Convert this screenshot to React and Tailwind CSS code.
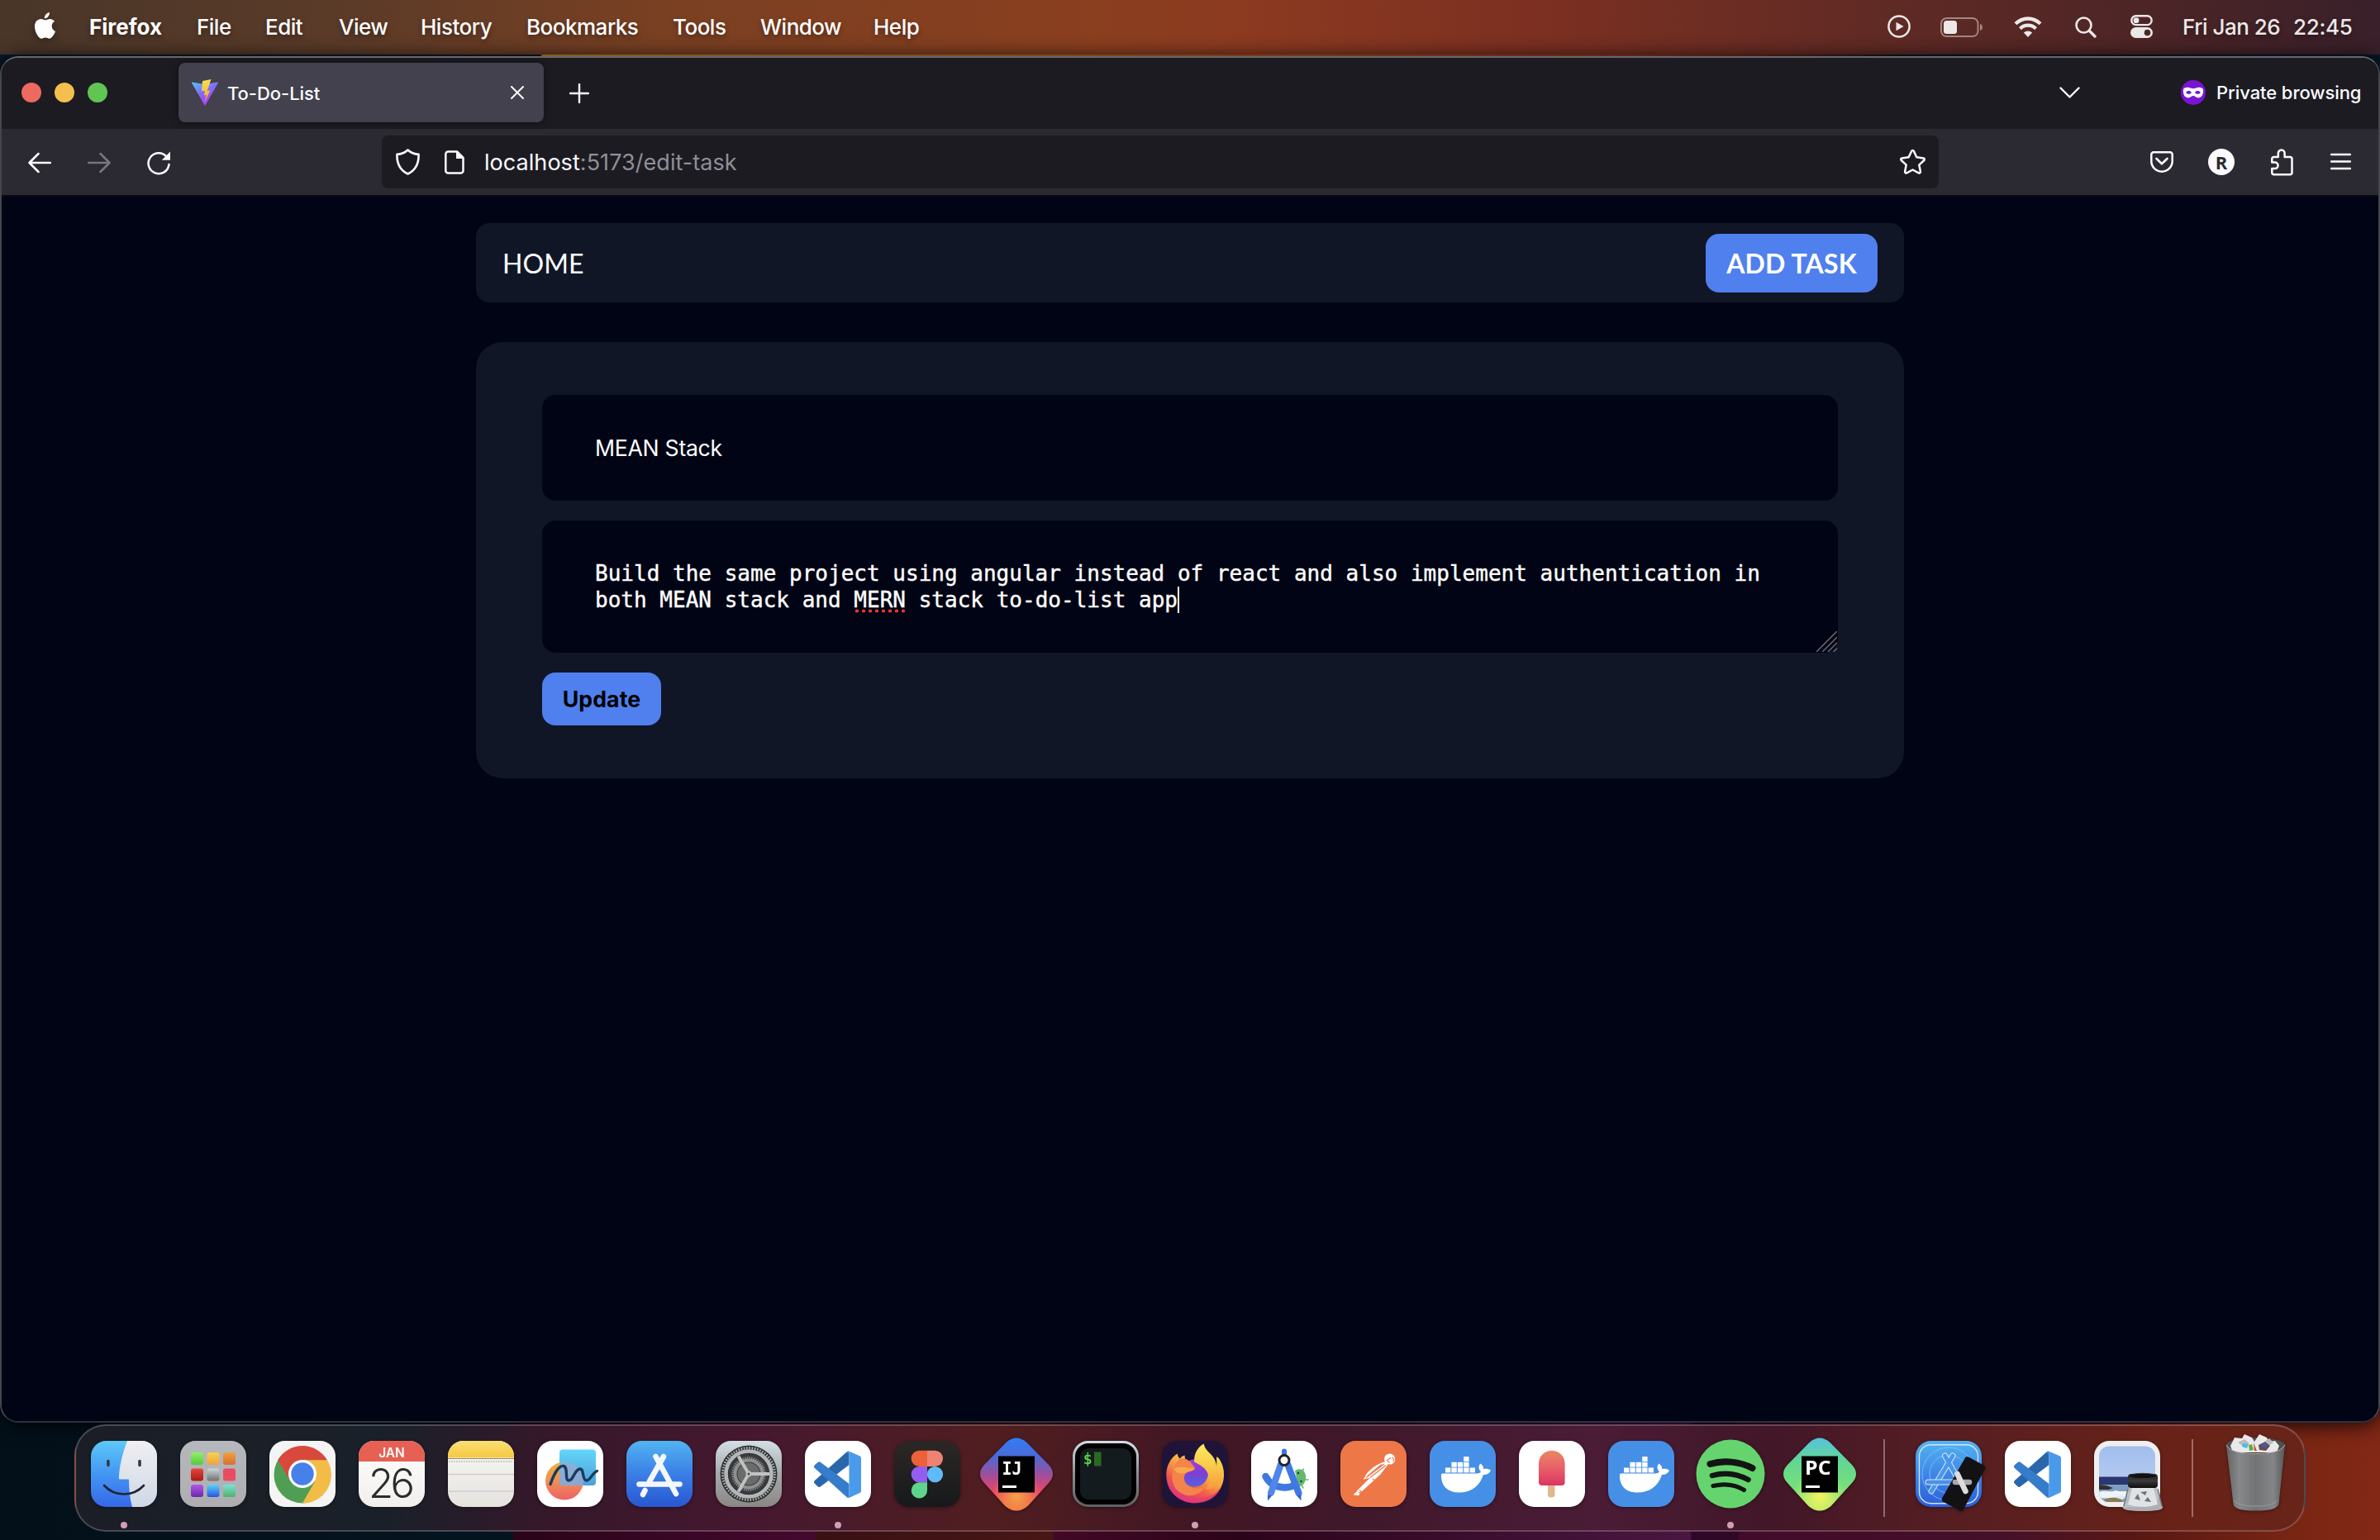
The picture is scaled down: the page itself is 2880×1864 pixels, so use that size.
import React from "react";

const stroke = { fill: "none", stroke: "currentColor", strokeLinecap: "round", strokeLinejoin: "round" };

/* ---------- menu bar ---------- */

const menus = [
  ["File", "w-[83px]"],
  ["Edit", "w-[89px]"],
  ["View", "w-[99px]"],
  ["History", "w-[128px]"],
  ["Bookmarks", "w-[177px]"],
  ["Tools", "w-[106px]"],
  ["Window", "w-[137px]"],
  ["Help", "w-[60px]"],
];

function MenuBar() {
  return (
    <header className="flex h-[66px] shrink-0 items-center bg-[linear-gradient(90deg,#493629_0%,#5c3b28_15%,#7a4022_28%,#8a3f1f_46%,#8c3a20_52%,#7d3021_64%,#642b24_77%,#4d2526_90%,#39202a_100%)] pb-[2px] pl-[41px] text-[26px] font-medium text-white">
      <svg className="-mt-[2px] h-[32px] w-[27px] drop-shadow-[0_3px_4px_rgba(0,0,0,0.35)]" viewBox="0 0 27 32" fill="white">
        <path d="M18.8 0c.3 2-.5 3.900-1.700 5.300-1.200 1.400-2.800 2.300-4.300 2.200-.3-1.900.6-3.800 1.700-5.100C15.700 1 17.500.1 18.800 0zM13.900 9.300c1.400 0 2.900-1.400 5.500-1.400 2.300 0 4.400 1.100 5.700 2.900-5.100 3-4.300 9.900.9 12.100-.7 1.900-1.500 3.500-2.600 5.200-1.300 1.900-2.600 3.600-4.600 3.600-1.900 0-2.500-1.200-4.800-1.200s-3 1.200-4.800 1.200c-2 0-3.400-1.900-4.700-3.800C.900 22.500-.6 14.600 3.100 10.500c1.400-1.700 3.500-2.600 5.500-2.600 2.300 0 3.900 1.400 5.300 1.400z" />
      </svg>
      <nav className="ml-[40px] flex items-center whitespace-nowrap [text-shadow:0_3px_6px_rgba(0,0,0,0.4)]">
        <span className="w-[130px] font-bold tracking-[0px]">Firefox</span>
        {menus.map(([label, w]) => (
          <span key={label} className={w + " tracking-[-0.5px]"}>{label}</span>
        ))}
      </nav>
      <div className="ml-auto flex items-center pr-[33px] text-[#ece8e8] [text-shadow:0_3px_6px_rgba(0,0,0,0.4)]">
        <svg className="h-[28px] w-[28px]" viewBox="0 0 28 28">
          <circle cx="14" cy="14" r="12.600" {...stroke} strokeWidth="2.500" />
          <path d="M10.500 8.800v10.400l9-5.200z" fill="currentColor" />
        </svg>
        <svg className="ml-[36px] mt-[2px] h-[24px] w-[52px]" viewBox="0 0 52 24">
          <rect x="1" y="1" width="44.500" height="22" rx="6.500" fill="none" stroke="#a58682" strokeWidth="2" />
          <path d="M48 8c4 1 4 7 0 8z" fill="#a58682" />
          <rect x="4" y="4" width="16" height="16" rx="3.500" fill="currentColor" />
        </svg>
        <svg className="ml-[37px] h-[25px] w-[34px]" viewBox="0 0 34 25">
          <path d="M2 8.800C10.500.400 23.500.400 32 8.800M7.500 14.600c5.500-5.200 13.500-5.200 19 0" fill="none" stroke="currentColor" strokeWidth="4.300" />
          <path d="M17 25l-5.200-5.600c3-2.700 7.400-2.700 10.400 0z" fill="currentColor" />
        </svg>
        <svg className="ml-[40px] mt-[2px] h-[26px] w-[26px]" viewBox="0 0 26 26">
          <circle cx="10.500" cy="10.500" r="9" {...stroke} strokeWidth="2.600" />
          <path d="M17.500 17.500l6.500 6.500" {...stroke} strokeWidth="3.400" />
        </svg>
        <svg className="ml-[41px] h-[28px] w-[27px]" viewBox="0 0 27 28">
          <rect x="1.300" y="1.300" width="24.400" height="10.800" rx="5.400" fill="none" stroke="currentColor" strokeWidth="2.400" />
          <circle cx="7" cy="6.700" r="3.400" fill="currentColor" />
          <rect x="0" y="15" width="27" height="13" rx="6.500" fill="currentColor" />
          <circle cx="20.500" cy="21.500" r="3.800" fill="#4a2628" />
        </svg>
        <span className="ml-[36px] w-[134px] whitespace-nowrap tracking-[-0.5px]">Fri Jan 26</span>
        <span className="w-[72px] whitespace-nowrap tracking-[-0.3px]">22:45</span>
      </div>
    </header>
  );
}

/* ---------- browser chrome ---------- */

function ViteLogo() {
  return (
    <svg className="h-[32px] w-[32px]" viewBox="0 0 32 32">
      <defs>
        <linearGradient id="viteA" x1="0" y1="0" x2="0.6" y2="1">
          <stop offset="0" stopColor="#52c8fb" />
          <stop offset="0.5" stopColor="#7f6df5" />
          <stop offset="1" stopColor="#b23cf0" />
        </linearGradient>
        <linearGradient id="viteB" x1="0.4" y1="0" x2="0.5" y2="1">
          <stop offset="0" stopColor="#f9e04f" />
          <stop offset="1" stopColor="#f5a73a" />
        </linearGradient>
      </defs>
      <path d="M.5 3.400L16 6l15.500-2.600c.5 0 .7.500.4 1L16.600 31.300c-.3.500-.9.500-1.200 0L.1 4.400c-.3-.5 0-1 .4-1z" fill="url(#viteA)" />
      <path d="M23.500 0l-10.500 2-1 12.500 4-.8-1.200 5.800 3-.8-2.300 9.600 6.800-15-3.600.8z" fill="url(#viteB)" />
    </svg>
  );
}

function TabStrip() {
  return (
    <div className="flex h-[86px] items-center bg-[#1c1b22] pb-[2px] pl-[24px] pr-[24px]">
      <div className="flex gap-[16px]">
        <span className="h-[24px] w-[24px] rounded-full bg-[#ed6a5e]" />
        <span className="h-[24px] w-[24px] rounded-full bg-[#f5bf4f]" />
        <span className="h-[24px] w-[24px] rounded-full bg-[#61c554]" />
      </div>
      <div className="ml-[86px] flex h-[72px] w-[442px] items-center rounded-lg bg-[#42414d] pl-4 pr-[24px] text-[#fbfbfe] shadow-[0_0_8px_rgba(0,0,0,0.5)]">
        <ViteLogo />
        <span className="ml-[11px] mt-[3px] whitespace-nowrap text-[22px] font-medium tracking-[-0.05px]">To-Do-List</span>
        <svg className="ml-auto h-[16px] w-[16px]" viewBox="0 0 16 16">
          <path d="M1 1l14 14M15 1L1 15" {...stroke} strokeWidth="2" />
        </svg>
      </div>
      <svg className="ml-[31px] mt-[2px] h-[24px] w-[24px] text-[#fbfbfe]" viewBox="0 0 24 24">
        <path d="M12 1v22M1 12h22" {...stroke} strokeWidth="2.400" />
      </svg>
      <svg className="ml-auto h-[14px] w-[25px] text-[#fbfbfe]" viewBox="0 0 25 14">
        <path d="M1.500 1.500l11 11 11-11" {...stroke} strokeWidth="2.400" />
      </svg>
      <svg className="ml-[122px] h-[30px] w-[30px]" viewBox="0 0 30 30">
        <circle cx="15" cy="15" r="15" fill="#7a14d4" />
        <path fillRule="evenodd" d="M3 11.500C3.500 9 7 8.200 10 9c2 .5 3.500 1.200 5 1.200S18 9.500 20 9c3-.8 6.500 0 7 2.500.5 4-.8 9-5 9.800-3 .6-4.800-2.300-7-2.300s-4 2.900-7 2.300c-4.200-.8-5.500-5.800-5-9.800zm3.200 3.400c1.600 2.400 5 2.600 6.800 0-1.800-2.600-5.200-2.400-6.800 0zm10.800 0c1.800 2.600 5.200 2.400 6.800 0-1.600-2.400-5-2.600-6.800 0z" fill="white" />
      </svg>
      <span className="ml-[13px] w-[172px] whitespace-nowrap text-[22px] font-medium tracking-[-0.08px] text-[#fbfbfe]">Private browsing</span>
    </div>
  );
}

function Toolbar() {
  return (
    <div className="flex h-[80px] items-center bg-[#2b2a33] pl-[32px] text-[#fbfbfe]">
      <svg className="mt-[2px] h-[26px] w-[28px]" viewBox="0 0 28 26">
        <path d="M12.500 2L1.500 13l11 11M2 13h25" {...stroke} strokeWidth="2.500" />
      </svg>
      <svg className="ml-[44px] mt-[2px] h-[26px] w-[28px] text-[#77767e]" viewBox="0 0 28 26">
        <path d="M15.500 2l11 11-11 11M26 13H1" {...stroke} strokeWidth="2.500" />
      </svg>
      <svg className="ml-[44px] mt-[2px] h-[30px] w-[28px]" viewBox="0 0 28 30">
        <path d="M23.500 7.500A12.500 12.500 0 1 0 26.500 17" {...stroke} strokeWidth="2.500" />
        <path d="M28 1.500v10.200H17.800z" fill="currentColor" />
      </svg>
      <div className="ml-[256px] flex h-[64px] w-[1884px] items-center rounded-lg bg-[#1c1b22] pl-[17px] pr-[15px]">
        <svg className="h-[32px] w-[29px]" viewBox="0 0 29 32">
          <path d="M14.500 1.500c3.500 3.300 8 5 13 5.400C28 17.500 24.500 25.500 14.500 30.500 4.500 25.500 1 17.500 1.500 6.900c5-.4 9.500-2.100 13-5.400z" {...stroke} strokeWidth="2.600" />
        </svg>
        <svg className="ml-[30px] h-[29px] w-[24px]" viewBox="0 0 24 29">
          <path d="M4.300 1.500h10.700l7.500 7.500v15.500a3 3 0 0 1-3 3H4.300a3 3 0 0 1-3-3v-20a3 3 0 0 1 3-3z" {...stroke} strokeWidth="2.500" />
          <path d="M14 1.500v8.500h9z" fill="currentColor" />
        </svg>
        <span className="ml-[24px] mt-[3px] whitespace-nowrap text-[27px] tracking-[0.05px]">
          localhost<span className="text-[#8f8f98]">:5173/edit-task</span>
        </span>
        <svg className="ml-auto h-[32px] w-[33px]" viewBox="0 0 33 32">
          <path d="M16.500 2c.6 0 1.100.4 1.400 1l3.400 7.300 8.200 1.100c1.300.2 1.700 1.700.8 2.600l-6 5.600 1.600 8.200c.2 1.300-1.100 2.200-2.200 1.600L16.500 25.500l-7.200 3.900c-1.100.6-2.400-.3-2.200-1.600l1.600-8.200-6-5.600c-.9-.9-.5-2.400.8-2.600l8.200-1.100L15.100 3c.3-.6.800-1 1.400-1z" {...stroke} strokeWidth="2.500" />
        </svg>
      </div>
      <svg className="ml-[256px] h-[26px] w-[28px]" viewBox="0 0 28 26">
        <path d="M4 1.300h20a2.700 2.700 0 0 1 2.700 2.700v8c0 7-5.500 12.700-12.700 12.700S1.300 19 1.300 12V4A2.700 2.700 0 0 1 4 1.300z" {...stroke} strokeWidth="2.500" />
        <path d="M7.500 9l6.500 6.300L20.500 9" {...stroke} strokeWidth="2.600" />
      </svg>
      <span className="ml-[42px] flex h-[32px] w-[32px] items-center justify-center rounded-full bg-[#fbfbfe] font-['Open_Sans'] text-[22px] font-bold leading-none text-[#2b2a33]">R</span>
      <svg className="ml-[44px] h-[33px] w-[27px]" viewBox="0 0 27 33">
        <path d="M3.500 10h5.300V5.500a3.900 3.900 0 0 1 7.800 0V10h6.400a2.500 2.500 0 0 1 2.500 2.500v16.300a2.500 2.500 0 0 1-2.500 2.500H3.800a2.500 2.500 0 0 1-2.500-2.500v-4.700h3.500a3.500 3.500 0 0 0 0-7.500H1.300v-4.400A2.200 2.200 0 0 1 3.500 10z" {...stroke} strokeWidth="2.500" />
      </svg>
      <svg className="ml-[45px] h-[22px] w-[25px]" viewBox="0 0 25 22">
        <path d="M1 2h23M1 10.500h23M1 19h23" {...stroke} strokeWidth="2.500" />
      </svg>
    </div>
  );
}

/* ---------- page ---------- */

function Page() {
  return (
    <main className="flex flex-1 flex-col items-center border-t-2 border-[#0a0a12] bg-[#010414] pt-[32px]">
      <nav className="flex h-[96px] w-[1728px] items-center justify-between rounded-2xl bg-[#111627] px-[32px] font-[Lato] text-[32px] text-white">
        <span className="mt-[2px] whitespace-nowrap tracking-[0.1px]">HOME</span>
        <button className="mt-[1px] h-[71px] w-[208px] whitespace-nowrap rounded-2xl bg-[#4f80ed] font-bold tracking-[0.15px]">ADD TASK</button>
      </nav>
      <section className="mt-[48px] flex h-[528px] w-[1728px] flex-col items-start rounded-[32px] bg-[#111627] px-[80px] pt-[64px]">
        <div className="flex h-[128px] w-full items-center rounded-2xl bg-[#010414] px-[64px] text-[26.670px] tracking-[-0.3px] text-white">MEAN Stack</div>
        <div className="relative mt-[24px] h-[160px] w-full whitespace-nowrap rounded-2xl bg-[#010414] px-[64px] pt-[48px] font-['DejaVu_Sans_Mono'] text-[26px] leading-[32px] tracking-[0.012px] text-white [-webkit-text-stroke:0.4px_white]">
          <p>Build the same project using angular instead of react and also implement authentication in</p>
          <p className="flex">
            <span className="whitespace-pre">both MEAN stack and </span>
            <span className="bg-[radial-gradient(circle,#e8342c_1.8px,transparent_2.2px)] bg-[length:8px_5px] bg-[position:0_100%] bg-repeat-x">MERN</span>
            <span className="whitespace-pre"> stack to-do-list app</span>
            <span className="h-[32px] w-[2px] bg-white" />
          </p>
          <svg className="absolute bottom-[1px] right-[1px] h-[25px] w-[25px]" viewBox="0 0 26 26">
            <path d="M0 26L26 0M7.500 26L26 7.500M14.500 26L26 14.500M21.500 26l4.500-4.500" stroke="#6b6b70" strokeWidth="1.600" />
          </svg>
        </div>
        <button className="mt-[24px] flex h-[64px] w-[144px] items-center justify-center rounded-2xl bg-[#4f80ed] text-[26.670px] font-bold tracking-[0.1px] text-black">Update</button>
      </section>
    </main>
  );
}

/* ---------- dock ---------- */

function Icon({ children, dot }) {
  return (
    <div className="relative h-[80px] w-[80px] shrink-0">
      <svg className="h-[80px] w-[80px] overflow-visible drop-shadow-[0_1px_2px_rgba(0,0,0,0.4)]" viewBox="0 0 80 80">{children}</svg>
      {dot && <span className="absolute left-[36px] top-[98px] h-[8px] w-[8px] rounded-full bg-[#cfa0b4]" />}
    </div>
  );
}

function Tile({ fill }) {
  return <rect width="80" height="80" rx="18.500" fill={fill} />;
}

function Grad({ id, stops, x2 = 0, y2 = 1 }) {
  return (
    <linearGradient id={id} x1="0" y1="0" x2={x2} y2={y2}>
      {stops.map((c, i) => (
        <stop key={i} offset={i / (stops.length - 1)} stopColor={c} />
      ))}
    </linearGradient>
  );
}

function Finder() {
  return (
    <>
      <Grad id="fnA" stops={["#5cc9f8", "#4396f2", "#3568e8"]} />
      <Grad id="fnB" stops={["#f0eff1", "#cfd8e6"]} />
      <clipPath id="fnC"><rect width="80" height="80" rx="18.500" /></clipPath>
      <g clipPath="url(#fnC)">
        <rect width="80" height="80" fill="url(#fnA)" />
        <path d="M44 0C38 16 34.500 30 33.800 45q0 1.500 1.500 1.500H46C46 58 47 70 50 80H80V0z" fill="url(#fnB)" />
      </g>
      <path d="M20.900 24.500v5M59 24.500v5" stroke="#333a48" strokeWidth="3.600" strokeLinecap="round" />
      <path d="M16 54c13 14 35 14 48 0" fill="none" stroke="#1f2530" strokeWidth="2.600" strokeLinecap="round" />
    </>
  );
}

const padColors = [
  ["#93f064", "#55c93e"], ["#f9d24f", "#eda43a"], ["#eda23f", "#dc6e33"],
  ["#e8453a", "#a81c14"], ["#cfd4d8", "#6d7275"], ["#e84a64", "#ea4f5e"],
  ["#b258e6", "#6a2aa8"], ["#5bd0fa", "#2a55dd"], ["#7ce0d8", "#52b06a"],
];

function Launchpad() {
  return (
    <>
      <Grad id="lpBg" stops={["#b5b8bc", "#aeaeb2"]} />
      <Tile fill="url(#lpBg)" />
      {padColors.map((c, i) => (
        <g key={i}>
          <Grad id={"lp" + i} stops={c} />
          <rect x={13 + (i % 3) * 19.500} y={14 + Math.floor(i / 3) * 19.500} width="15" height="15" rx="3" fill={"url(#lp" + i + ")"} />
        </g>
      ))}
    </>
  );
}

function Chrome() {
  return (
    <>
      <Tile fill="#f4f4f4" />
      <circle cx="40" cy="41" r="34.500" fill="#4f9e54" />
      <path d="M10.100 23.300A34.500 34.500 0 0 1 69.900 23.300H40L25.500 48.700z" fill="#d8493b" />
      <path d="M69.900 23.300A34.500 34.500 0 0 1 40 75.500L54.800 49.500 40 23.300z" fill="#f3bc46" />
      <circle cx="40" cy="40" r="17" fill="#fff" />
      <circle cx="40" cy="40" r="13.700" fill="#4680e8" />
    </>
  );
}

function Calendar() {
  return (
    <>
      <Grad id="calG" stops={["#ffffff", "#f0efec"]} />
      <Tile fill="url(#calG)" />
      <path d="M0 25V18.500A18.500 18.500 0 0 1 18.500 0h43A18.500 18.500 0 0 1 80 18.500V25z" fill="#e66054" />
      <text x="40" y="19.500" textAnchor="middle" fontFamily="Inter" fontSize="15.500" fontWeight="600" fill="#fff">JAN</text>
      <text x="40" y="68.500" textAnchor="middle" fontFamily="Inter" fontSize="49" fontWeight="300" fill="#2c2c2c" textLength="56">26</text>
    </>
  );
}

function Notes() {
  return (
    <>
      <Grad id="ntA" stops={["#f8f8f6", "#e4e3de"]} />
      <Grad id="ntB" stops={["#f9df75", "#f6c840"]} />
      <Tile fill="url(#ntA)" />
      <path d="M0 20.500V18.500A18.500 18.500 0 0 1 18.500 0h43A18.500 18.500 0 0 1 80 18.500v2z" fill="url(#ntB)" />
      <path d="M0 21.500h80" stroke="#96927f" strokeWidth="1.200" />
      <path d="M1 25h78" stroke="#b4b4ae" strokeWidth="1.600" strokeDasharray="1.600 1.400" />
      <path d="M0 40.500h80M0 61h80" stroke="#cfcdd2" strokeWidth="1.500" />
    </>
  );
}

function Freeform() {
  return (
    <>
      <Grad id="ffA" stops={["#f0b23e", "#ee8f55", "#ee6166"]} />
      <Grad id="ffB" stops={["#62d6fa", "#4f9fd8"]} />
      <Tile fill="#fff" />
      <circle cx="33" cy="48.500" r="23" fill="url(#ffA)" />
      <rect x="27" y="10.500" width="44" height="43.500" rx="4" fill="url(#ffB)" />
      <path d="M27 26.300A23 23 0 0 1 55.300 54H31a4 4 0 0 1-4-4z" fill="#9fa9d0" opacity="0.75" />
      <path d="M16 52.500C21 38 27 29.500 32 30.500c6 1.500 1 17 6 17.500 6 .5 7-14 14-14 5 0 2 13 7.500 14C64 48.500 67 38.500 72.500 36.500" fill="none" stroke="#173c5c" strokeWidth="3.400" strokeLinecap="round" />
    </>
  );
}

function AppStore() {
  return (
    <>
      <Grad id="asA" stops={["#52b4f1", "#3a7fe6", "#2857d2"]} />
      <Tile fill="url(#asA)" />
      <g stroke="#f3f6fb" strokeWidth="6.600" strokeLinecap="round" fill="none">
        <path d="M35.500 19L60 64M45 19L28 49M15.500 52.500h49M22.500 60l-2.500 5" />
      </g>
    </>
  );
}

function Settings() {
  return (
    <>
      <Grad id="stA" stops={["#d3dfe6", "#a6a9ab", "#8a8784"]} />
      <Tile fill="url(#stA)" />
      <circle cx="40" cy="40" r="34.500" fill="#2c2d2e" />
      <circle cx="40" cy="40" r="31.500" fill="none" stroke="#a9adaf" strokeWidth="3" strokeDasharray="1.700 1.600" />
      <circle cx="40" cy="40" r="27.500" fill="none" stroke="#b4b7b9" strokeWidth="4.600" />
      <circle cx="40" cy="40" r="24.500" fill="#3a3b3c" />
      <circle cx="40" cy="40" r="19.500" fill="none" stroke="#8c8e90" strokeWidth="2.500" strokeDasharray="1.400 1.300" />
      <circle cx="40" cy="40" r="16.500" fill="none" stroke="#8e9092" strokeWidth="4" />
      <circle cx="40" cy="40" r="13.500" fill="#6b6b6a" />
      <path d="M40 40h25M40 40L27.500 18.500M40 40L27.500 61.500" stroke="#c0c2c4" strokeWidth="3.800" />
      <circle cx="40" cy="40" r="3.500" fill="#c0c2c4" />
      <circle cx="40" cy="40" r="1.500" fill="#4a4a4a" />
    </>
  );
}

function VSCode() {
  return (
    <>
      <Tile fill="#fff" />
      <path d="M53.500 12.700V29L19 55.200c-1.200.9-2.300.9-3.400 0l-3.700-3.400c-1.200-1.200-1.200-2.600 0-3.800L50.500 13.500z" fill="#2a66ac" />
      <path d="M53.500 68.600V52L19 25.900c-1.200-.9-2.300-.9-3.400 0l-3.700 3.400c-1.200 1.200-1.200 2.600 0 3.800L50.500 68z" fill="#367ccb" />
      <path d="M53.500 12.700c-1.500-.6-2.600.1-3.500.9l3.500 2.400v50l-3.500 2c1 1 2 1.400 3.500.9l12.800-5.800c1.200-.6 1.700-1.500 1.700-2.700V21c0-1.200-.5-2.100-1.700-2.700z" fill="#4a9aec" />
    </>
  );
}

function Figma() {
  return (
    <>
      <Grad id="fgA" stops={["#2b2725", "#17191b"]} />
      <Tile fill="url(#fgA)" />
      <path d="M40 11.700v19.300H30.300a9.650 9.650 0 0 1 0-19.300z" fill="#ec6138" />
      <path d="M40 11.700h9.400a9.650 9.650 0 0 1 0 19.300H40z" fill="#ee8374" />
      <path d="M40 31v19.300H30.300a9.650 9.650 0 0 1 0-19.300z" fill="#955cf0" />
      <circle cx="49.500" cy="40.600" r="9.650" fill="#5fbaf8" />
      <path d="M40 50.300v9.600a9.650 9.650 0 1 1-9.700-9.600z" fill="#5fd48b" />
    </>
  );
}

function JetBrains({ label, id, stops, glow }) {
  return (
    <>
      <Grad id={id} stops={stops} />
      <radialGradient id={id + "r"} cx="0.500" cy="0.800" r="0.350">
        <stop offset="0" stopColor={glow} />
        <stop offset="1" stopColor={glow} stopOpacity="0" />
      </radialGradient>
      <path d="M27.500 2Q40-9 52.500 2L79 29Q89 40 79 51L53.500 79Q40 90 26.500 79L1 51Q-9 40 1 29z" fill={"url(#" + id + ")"} />
      <path d="M27.500 2Q40-9 52.500 2L79 29Q89 40 79 51L53.500 79Q40 90 26.500 79L1 51Q-9 40 1 29z" fill={"url(#" + id + "r)"} />
      <rect x="18" y="18.500" width="44" height="44" fill="#000" />
      <rect x="23" y="54" width="17" height="3" fill="#fff" />
      {label === "IJ" ? (
        <text x="22.500" y="40.700" fontFamily="DejaVu Sans Mono" fontSize="21" fontWeight="700" fill="#fff" textLength="24" lengthAdjust="spacingAndGlyphs">IJ</text>
      ) : (
        <text x="22" y="40.900" fontFamily="Open Sans" fontSize="23" fontWeight="700" fill="#fff" textLength="31.500" lengthAdjust="spacingAndGlyphs">PC</text>
      )}
    </>
  );
}

function Terminal() {
  return (
    <>
      <Grad id="tmA" stops={["#d2dfe6", "#8a9094", "#5e5f61"]} />
      <Tile fill="url(#tmA)" />
      <rect x="3" y="3" width="74" height="74" rx="16" fill="#000" />
      <rect x="9" y="9" width="62" height="62" rx="10" fill="#141b1e" />
      <text x="13" y="28" fontFamily="DejaVu Sans Mono" fontSize="17" fill="#5ad94a" stroke="#5ad94a" strokeWidth="0.500">$</text>
      <rect x="26" y="13.500" width="8.500" height="17" fill="#2c691f" />
    </>
  );
}

function Firefox() {
  return (
    <>
      <linearGradient id="fxA" x1="0.800" y1="0.100" x2="0.250" y2="0.950">
        <stop offset="0" stopColor="#fbe75a" />
        <stop offset="0.400" stopColor="#f7a541" />
        <stop offset="0.700" stopColor="#f0564b" />
        <stop offset="1" stopColor="#dd3383" />
      </linearGradient>
      <Grad id="fxB" stops={["#a441d8", "#7b3fd6", "#5562dc"]} />
      <Grad id="fxC" stops={["#fbe95f", "#f9cb48", "#f59a3e"]} />
      <Tile fill="#1f1438" />
      <path d="M18.600 15.500c.5 2.500 1.500 4.500 3 6 1.500-1.800 3.500-3.200 6-4 0 3 .5 5.500 2 7.500L40 24l12-4c10 2 14 8 15 16l-1-17c6 6 9 13 9 22.500C75 60 59.500 75 40 75S5.300 60 5.300 41c0-11.500 6-21 13.300-25.500z" fill="url(#fxA)" />
      <circle cx="39.500" cy="39" r="16.500" fill="url(#fxB)" />
      <path d="M39 25c0-10 4-17 11.700-21.500C52 12 60 15 63.500 22c1.700 3.300 2.500 6 2.500 9l1.500-11.500C73 26 74.800 33 74.600 41 73 53 63 60 53 58c5-5 6-13 1.500-20.500C51 31 45 29 39 25z" fill="url(#fxC)" />
      <path d="M21 22c6-3 12 1 17 8 1.500 2 2.500 3 2 4-2 3-9 3-11.500 6-3 4-1.500 9 1.500 12.500C36 59 47 59 52 54c-3 12-20 16-31 8C10 54 9 34 21 22z" fill="#f4844a" />
      <path d="M14 34c7-4 18-1.500 25-.5-1.500 3.500-8 3-11 5.500-3 1-7 .5-10-1z" fill="#f8a94c" />
      <path d="M6 50c6 14 19 20 34 20 14 0 26-5 32-15-4 12-16 20.500-32 20.500S9.500 65 6 50z" fill="#e23a78" opacity="0.700" />
    </>
  );
}

function AndroidStudio() {
  return (
    <>
      <Tile fill="#fff" />
      <path d="M53 36c8-5 14 1 13 10-1 7-5 9-9 9z" fill="#65b86b" />
      <path d="M61.500 37l2-3M65 47h4M61 54l2 3" stroke="#65b86b" strokeWidth="1.500" strokeLinecap="round" />
      <circle cx="57" cy="39" r="1.200" fill="#233" />
      <circle cx="60.500" cy="49" r="1.200" fill="#233" />
      <path d="M17.500 43c4 8 12 13.500 22.500 13.500 5 0 9-1 13-3" fill="none" stroke="#3f78e0" strokeWidth="8.500" strokeLinecap="round" />
      <path d="M40 12.500V20" stroke="#3a74dc" strokeWidth="6" strokeLinecap="round" />
      <path d="M36 28L24 63" stroke="#4f86ec" strokeWidth="8" strokeLinecap="round" />
      <path d="M44 28l13.500 35" stroke="#3f78e4" strokeWidth="8" strokeLinecap="round" />
      <path d="M20 65l5 1.500-5 6zM60.500 65l-5 1.500 5 6z" fill="#2f62c8" />
      <circle cx="40" cy="23.500" r="6" fill="#fff" stroke="#202326" strokeWidth="3" />
    </>
  );
}

function Postman() {
  return (
    <>
      <Tile fill="#ee7748" />
      <circle cx="59.600" cy="22" r="6.600" fill="#fff" />
      <path d="M61 20.500l-4.500 3 3 3M62.500 20c2 1 2.500 3 1.500 5" fill="none" stroke="#ee7748" strokeWidth="1.200" />
      <path d="M53 25.500c2 0 4 1.500 4 4L48 41 24.500 62.500l-5-1.500L36 44.500l-8.500 2.200c2-2.500 3.200-4.500 4-6.700C37 33.500 45 27.500 53 25.500z" fill="#fff" />
      <path d="M53 28L31 44.500M55 29.500L36 44.500M50 28.500l-17 14M39 46l3 2M23 59.500l3 3" fill="none" stroke="#ee7748" strokeWidth="1.300" />
      <path d="M15.500 65.300l5-4.500 3 3.500-1.500 2z" fill="#fff" />
    </>
  );
}

function Docker() {
  const boxes = [[0, 0], [1, 0], [2, 0], [3, 0], [4, 0], [1, 1], [2, 1], [3, 1], [3, 2]];
  return (
    <>
      <Tile fill="#468fe6" />
      {boxes.map(([c, r]) => (
        <rect key={c + "-" + r} x={19 + c * 7.400} y={32.500 - r * 6.700} width="6.400" height="5.900" fill="#fff" />
      ))}
      <path d="M15.500 39.500H57c2.500 0 4-.8 5-2-3-3.300-3.300-6.700-.7-10 2.500 1.500 4 3.800 4 6.700 3-.8 6-.2 8.700 1.600-1.500 3.500-4.500 5.200-9 5.200C60.500 55 50 62.500 35.500 62.500 21 62.500 13.500 54 14 41q0-1.500 1.500-1.500z" fill="#fff" />
    </>
  );
}

function Popsicle() {
  return (
    <>
      <Grad id="ppA" stops={["#e98763", "#e8606a", "#dc355f"]} />
      <Tile fill="#fff" />
      <rect x="35" y="50" width="8.500" height="18.500" rx="3.800" fill="#e0b98a" />
      <path d="M24 27.500a15.800 15.800 0 0 1 31.600 0V50q0 4-4 4H28q-4 0-4-4z" fill="url(#ppA)" />
    </>
  );
}

function Spotify() {
  return (
    <>
      <circle cx="40" cy="40" r="41.500" fill="#65d46e" />
      <g fill="none" stroke="#121512" strokeLinecap="round">
        <path d="M15.500 28C32 23 51 25 66.500 33" strokeWidth="8" />
        <path d="M18 42C32 38 48 39.500 61.500 47" strokeWidth="6.500" />
        <path d="M19 54.500c13-3 26-2 37.500 5" strokeWidth="5.200" />
      </g>
    </>
  );
}

function Simulator() {
  return (
    <>
      <Grad id="smA" stops={["#52b4f1", "#3f86e8", "#2c5ed8"]} />
      <Tile fill="url(#smA)" />
      <rect x="4.500" y="4.700" width="71" height="71" rx="14" fill="none" stroke="#cfe6fb" strokeWidth="1.400" />
      <circle cx="40" cy="40" r="32" fill="none" stroke="#8ac3f3" strokeWidth="0.800" />
      <circle cx="40" cy="40" r="23" fill="none" stroke="#8ac3f3" strokeWidth="0.800" />
      <g strokeLinecap="round" fill="none">
        <path d="M35.500 18L58 58M45 18L19 61" stroke="#d6e9fb" strokeWidth="7" />
        <path d="M35.500 18L58 58M45 18L19 61" stroke="#4b97e8" strokeWidth="5" />
        <path d="M15 50h48" stroke="#d6e9fb" strokeWidth="7" />
        <path d="M15 50h48" stroke="#4a92e4" strokeWidth="5" />
      </g>
      <path d="M60 20.500q1.500-2 4-1l18.500 10q2.500 1.700 1.500 4.500L58 83q-1.500 3-4.500 1.500L33 73.500q-2-1.500-1-4z" fill="#121214" />
      <path d="M48 50h17" stroke="#a9a9ab" strokeWidth="6.600" strokeLinecap="round" />
      <path d="M50.500 40l10 21" stroke="#dcdcde" strokeWidth="6.600" strokeLinecap="round" />
    </>
  );
}

function Preview() {
  return (
    <>
      <Grad id="pvA" stops={["#9fbcee", "#c3d3f0"]} />
      <Grad id="pvB" stops={["#1c1c1e", "#3a3a3c", "#0c0c0d"]} />
      <Tile fill="#efeff0" />
      <clipPath id="pvC"><rect x="6" y="6.500" width="68" height="67.500" rx="12" /></clipPath>
      <g clipPath="url(#pvC)">
        <rect width="80" height="80" fill="url(#pvA)" />
        <rect y="43.500" width="80" height="12" fill="#2b3770" />
        <rect y="53" width="80" height="27" fill="#7f9fc0" />
        <path d="M6 62c8-3 14 1 20-2 6 2 12 0 18 2v6c-12-2-26 3-38 1z" fill="#eef3f7" />
        <path d="M6 53l9 1 8 3-5 2H6z" fill="#33302f" />
        <path d="M10 74c5-6 16-7 24-2v6z" fill="#8d7a56" />
        <path d="M24 68l10-2 6 2-6 3z" fill="#dfe9f1" />
      </g>
      <path d="M42.500 56h33L83 80.500q0 4.500-24 4.500t-24.500-4.500z" fill="#b9bdc1" opacity="0.920" />
      <path d="M46 57h26l5 20q-18 6-36 0z" fill="#dfe3e6" />
      <path d="M49 70l4-6 3 8zM56 62l8-1-2 5zM61 73l4-5 4 6z" fill="#6f7377" />
      <path d="M41 58l-5 21M77 58l5 21" stroke="#77797c" strokeWidth="1.500" />
      <rect x="41" y="40" width="36" height="17" rx="4" fill="url(#pvB)" />
      <ellipse cx="59" cy="42.500" rx="17" ry="3.200" fill="#111" stroke="#3c3c3e" strokeWidth="0.800" />
    </>
  );
}

function Trash() {
  return (
    <>
      <linearGradient id="trA" x1="0" x2="1" y1="0" y2="0">
        <stop offset="0" stopColor="#626466" />
        <stop offset="0.220" stopColor="#86888a" />
        <stop offset="0.500" stopColor="#727476" />
        <stop offset="0.800" stopColor="#838587" />
        <stop offset="1" stopColor="#555759" />
      </linearGradient>
      <ellipse cx="39.500" cy="5" rx="35.500" ry="9" fill="#4c4e50" />
      <path d="M9 6l5-10 9 1 3-5 9 4 3 5 6-9 9 4 2 5 8-1 5 6-3 8H12z" fill="#e9e9e9" />
      <path d="M18 2l8-4 6 5-7 4zM50 1l6-4 5 5-6 4z" fill="#b9bbbd" />
      <path d="M24 3l7 1-2 5-6-2z" fill="#54b7e6" />
      <path d="M31 5l4-1 2 7-5 1z" fill="#5fae3c" />
      <path d="M43 5l8-4 6 5-5 6-8-1z" fill="#6b4a52" />
      <path d="M46 4l5-2 3 4-5 2z" fill="#3b5fb0" />
      <path d="M37 2l4 10h-3z" fill="#c04a3c" />
      <path d="M4 5c5 9 21 10.500 35.500 10.500S70 14 75 5L67.500 76q-1 8.600-28 8.600T12.500 76z" fill="url(#trA)" />
      <path d="M13.500 72q4 7 26 7t26-7" fill="none" stroke="#a1a3a5" strokeWidth="1.500" opacity="0.600" />
      <path d="M4 5c5 9 21 10.500 35.500 10.500S70 14 75 5" fill="none" stroke="#b3b5b6" strokeWidth="1" />
    </>
  );
}

function Dock() {
  return (
    <footer className="mx-auto mt-[2px] flex h-[130px] w-[2700px] shrink-0 items-start rounded-[38px] border-2 border-white/20 bg-[linear-gradient(90deg,#1b1e27_0%,#1a2029_14%,#35182a_21%,#451830_30%,#501e20_41%,#421724_50%,#3f182a_57%,#4a1c36_68%,#421728_76%,#561e22_84%,#682218_94%,#692419_100%)] pl-[18px] pt-[18px]">
      <div className="flex gap-[28px]">
        <Icon dot><Finder /></Icon>
        <Icon><Launchpad /></Icon>
        <Icon><Chrome /></Icon>
        <Icon><Calendar /></Icon>
        <Icon><Notes /></Icon>
        <Icon><Freeform /></Icon>
        <Icon><AppStore /></Icon>
        <Icon><Settings /></Icon>
        <Icon dot><VSCode /></Icon>
        <Icon><Figma /></Icon>
        <Icon><JetBrains label="IJ" id="ij" stops={["#2f7df6", "#4a6ad8", "#9c4f9c", "#ee4266", "#ef6a43"]} glow="#f6a244" /></Icon>
        <Icon><Terminal /></Icon>
        <Icon dot><Firefox /></Icon>
        <Icon><AndroidStudio /></Icon>
        <Icon><Postman /></Icon>
        <Icon><Docker /></Icon>
        <Icon><Popsicle /></Icon>
        <Icon><Docker /></Icon>
        <Icon dot><Spotify /></Icon>
        <Icon><JetBrains label="PC" id="pc" stops={["#57c3dc", "#62d792", "#76df7c", "#a4ea6a"]} glow="#f7f45f" /></Icon>
      </div>
      <span className="-mt-[2px] ml-[37px] h-[94px] w-[2px] bg-white/35" />
      <div className="ml-[37px] flex gap-[28px]">
        <Icon><Simulator /></Icon>
        <Icon><VSCode /></Icon>
        <Icon><Preview /></Icon>
      </div>
      <span className="-mt-[2px] ml-[38px] h-[94px] w-[2px] bg-white/35" />
      <div className="ml-[36px]">
        <Icon><Trash /></Icon>
      </div>
    </footer>
  );
}

export default function App() {
  return (
    <div className="flex h-[1864px] w-[2880px] flex-col overflow-hidden bg-[#06182a] bg-[linear-gradient(90deg,#03101a_0%,#04141f_21.500%,#2a0418_21.600%,#45092f_34.200%,#3a1013_34.300%,#481615_44.200%,#420826_44.300%,#2c0419_52%,#4a1642_71%,#2e0826_71.100%,#2e0826_73%,#420b2a_73.100%,#45102a_84%,#591812_90%,#7b2614_97%,#832816_100%)] bg-[length:100%_160px] bg-bottom bg-no-repeat font-[Inter,sans-serif]">
      <MenuBar />
      <div className="h-[2px] shrink-0 bg-[linear-gradient(90deg,#061a2e_22.700%,#d09332_22.800%,#c8702c_45%,#a03a22_68%,#571f22_76%,#061a2e_80%)]" />
      <div className="flex h-[1654px] shrink-0 flex-col overflow-hidden rounded-[22px] border-2 border-b-[#2f3140] border-l-[#44454d] border-r-[#44454d] border-t-[#67686c] bg-[#010414] shadow-[0_2px_24px_rgba(0,0,0,0.9)]">
        <TabStrip />
        <Toolbar />
        <Page />
      </div>
      <Dock />
    </div>
  );
}
